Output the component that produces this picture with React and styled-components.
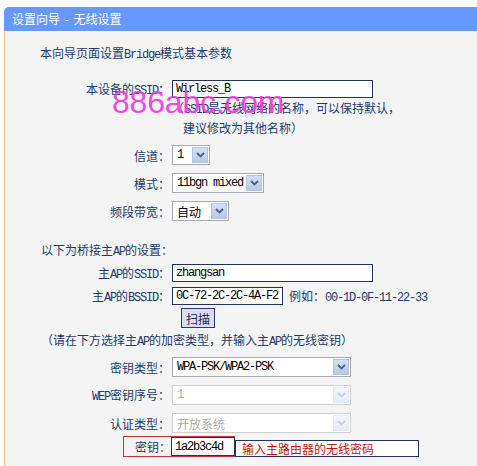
import React from "react";
import styled, { createGlobalStyle } from "styled-components";

const Global = createGlobalStyle`
  html, body { margin: 0; padding: 0; background: #ffffff; }
  body { font-family: "Noto Sans CJK SC", "Liberation Sans", sans-serif; font-size: 12px; }
  #root { width: 477px; height: 466px; overflow: hidden; }
`;

const NAVY = "#203c6c";
const MONO = `"Liberation Mono", "Courier New", monospace`;

const Page = styled.div`
  padding: 7px 0 0 4px;
  height: 466px;
  box-sizing: border-box;
  display: flex;
  flex-direction: column;
`;

const Header = styled.div`
  height: 24px;
  line-height: 24px;
  background: #6699ff;
  border-top-left-radius: 5px;
  color: #ffffff;
  font-size: 12px;
  padding-left: 8px;
  flex: none;
  word-spacing: 2px;
`;

const Body = styled.div`
  position: relative;
  flex: 1;
  background: #f4f4f4;
  border-left: 1px solid #f2bf80;
  padding-top: 13px;
  color: ${NAVY};
  font-size: 12px;
`;

const Watermark = styled.div`
  position: absolute;
  left: 107px;
  top: 55px;
  font-family: "Liberation Sans", Arial, sans-serif;
  font-size: 32px;
  line-height: 32px;
  color: rgba(240, 56, 224, 0.92);
  pointer-events: none;
  letter-spacing: -0.2px;
`;

const A = styled.span`
  font-family: ${MONO};
  font-size: 12px;
  letter-spacing: -1.2px;
`;

const Line = styled.div`
  height: ${(p) => p.$h || 18}px;
  line-height: ${(p) => p.$h || 18}px;
  margin-top: ${(p) => p.$mt || 0}px;
  padding-left: ${(p) => p.$x}px;
  white-space: nowrap;
`;

const Row = styled.div`
  display: flex;
  align-items: center;
  height: ${(p) => p.$h || 20}px;
  margin-top: ${(p) => p.$mt || 0}px;
  white-space: nowrap;
`;

const Label = styled.div`
  width: 165px;
  flex: none;
  text-align: right;
  margin-right: 2px;
  color: ${NAVY};
`;

const TextInput = styled.div`
  box-sizing: border-box;
  width: ${(p) => p.$w}px;
  height: ${(p) => p.$h || 18}px;
  border: 1px solid #1e3560;
  background: #ffffff;
  color: #000000;
  padding-left: 3px;
  display: flex;
  align-items: center;
  font-family: ${MONO};
  font-size: 12px;
  letter-spacing: -1.2px;
  flex: none;
`;

const SelectBox = styled.div`
  box-sizing: border-box;
  width: ${(p) => p.$w}px;
  height: 20px;
  border: 1px solid ${(p) => (p.$disabled ? "#cfcfcf" : "#a5a9b0")};
  background: #ffffff;
  display: flex;
  align-items: center;
  flex: none;
`;

const SelectValue = styled.div`
  flex: 1;
  padding-left: 4px;
  color: ${(p) => (p.$disabled ? "#ababab" : "#000000")};
  font-family: ${(p) => (p.$mono ? MONO : `"Noto Sans CJK SC", sans-serif`)};
  font-size: 12px;
  letter-spacing: ${(p) => (p.$mono ? -1.2 : 0)}px;
  overflow: hidden;
`;

const ArrowBox = styled.div`
  box-sizing: border-box;
  width: 16px;
  height: 16px;
  margin-right: 1px;
  border: 1px solid ${(p) => (p.$disabled ? "#e2e8f2" : "#b3c4e0")};
  background: ${(p) =>
    p.$disabled
      ? "linear-gradient(#f2f5fa, #e6ecf5)"
      : "linear-gradient(#d3e0f6, #b6c9e8)"};
  display: flex;
  align-items: center;
  justify-content: center;
  flex: none;
`;

const ScanButton = styled.div`
  box-sizing: border-box;
  width: 34px;
  height: 20px;
  margin-left: 9px;
  border: 1px solid #2a3a6a;
  background: #dcdcf4;
  color: #1a2a4a;
  display: flex;
  align-items: center;
  justify-content: center;
  font-size: 12px;
`;

const Example = styled.span`
  margin-left: 6px;
  color: ${NAVY};
`;

const Spacer = styled.div`
  width: ${(p) => p.$w}px;
  flex: none;
`;

const KeyBox = styled.div`
  box-sizing: border-box;
  height: 21px;
  border: 1px solid #c8323a;
  border-right: none;
  display: flex;
  align-items: center;
  flex: none;
`;

const KeyLabel = styled.div`
  width: 47px;
  text-align: right;
  color: ${NAVY};
`;

const HintBox = styled.div`
  box-sizing: border-box;
  width: 184px;
  height: 17px;
  margin-top: 4px;
  border: 1px solid #1e3560;
  background: #ffffff;
  color: #cc1111;
  padding-left: 6px;
  line-height: 15px;
  font-size: 12px;
  flex: none;
`;

const Chevron = ({ disabled }) => (
  <svg width="9" height="6" viewBox="0 0 9 6">
    <path
      d="M1 1 L4.5 4.5 L8 1"
      fill="none"
      stroke={disabled ? "#c5d0e2" : "#4a5f8a"}
      strokeWidth="1.8"
    />
  </svg>
);

const Select = ({ w, value, mono, disabled }) => (
  <SelectBox $w={w} $disabled={disabled}>
    <SelectValue $mono={mono} $disabled={disabled}>
      {value}
    </SelectValue>
    <ArrowBox $disabled={disabled}>
      <Chevron disabled={disabled} />
    </ArrowBox>
  </SelectBox>
);

export default function App() {
  return (
    <>
      <Global />
      <Page>
        <Header>设置向导 - 无线设置</Header>
        <Body>
          <Line $x={35}>
            本向导页面设置<A>Bridge</A>模式基本参数
          </Line>

          <Row $mt={18} $h={18}>
            <Label>
              本设备的<A>SSID</A>：
            </Label>
            <TextInput $w={201}>Wirless_B</TextInput>
          </Row>
          <Line $x={167} $h={20}>
            （<A>SSID</A>是无线网络的名称，可以保持默认，
          </Line>
          <Line $x={178} $h={20}>
            建议修改为其他名称）
          </Line>

          <Row $mt={7}>
            <Label>信道：</Label>
            <Select w={38} value="1" mono />
          </Row>
          <Row $mt={8}>
            <Label>模式：</Label>
            <Select w={92} value="11bgn mixed" mono />
          </Row>
          <Row $mt={8}>
            <Label>频段带宽：</Label>
            <Select w={57} value="自动" />
          </Row>

          <Line $x={36} $mt={20}>
            以下为桥接主<A>AP</A>的设置：
          </Line>
          <Row $mt={5} $h={18}>
            <Label>
              主<A>AP</A>的<A>SSID</A>：
            </Label>
            <TextInput $w={201}>zhangsan</TextInput>
          </Row>
          <Row $mt={5} $h={18}>
            <Label>
              主<A>AP</A>的<A>BSSID</A>：
            </Label>
            <TextInput $w={111}>0C-72-2C-2C-4A-F2</TextInput>
            <Example>
              例如：<A>00-1D-0F-11-22-33</A>
            </Example>
          </Row>
          <Row $mt={3}>
            <Spacer $w={167} />
            <ScanButton>扫描</ScanButton>
          </Row>
          <Line $x={36} $mt={3}>
            （请在下方选择主<A>AP</A>的加密类型，并输入主<A>AP</A>的无线密钥）
          </Line>

          <Row $mt={8}>
            <Label>密钥类型：</Label>
            <Select w={179} value="WPA-PSK/WPA2-PSK" mono />
          </Row>
          <Row $mt={8}>
            <Label>
              <A>WEP</A>密钥序号：
            </Label>
            <Select w={179} value="1" mono disabled />
          </Row>
          <Row $mt={8}>
            <Label>认证类型：</Label>
            <Select w={179} value="开放系统" disabled />
          </Row>
          <Row $mt={3} $h={21}>
            <Spacer $w={118} />
            <KeyBox>
              <KeyLabel>密钥：</KeyLabel>
              <TextInput $w={64} $h={19}>
                1a2b3c4d
              </TextInput>
            </KeyBox>
            <HintBox>输入主路由器的无线密码</HintBox>
          </Row>

          <Watermark>886abc.com</Watermark>
        </Body>
      </Page>
    </>
  );
}
